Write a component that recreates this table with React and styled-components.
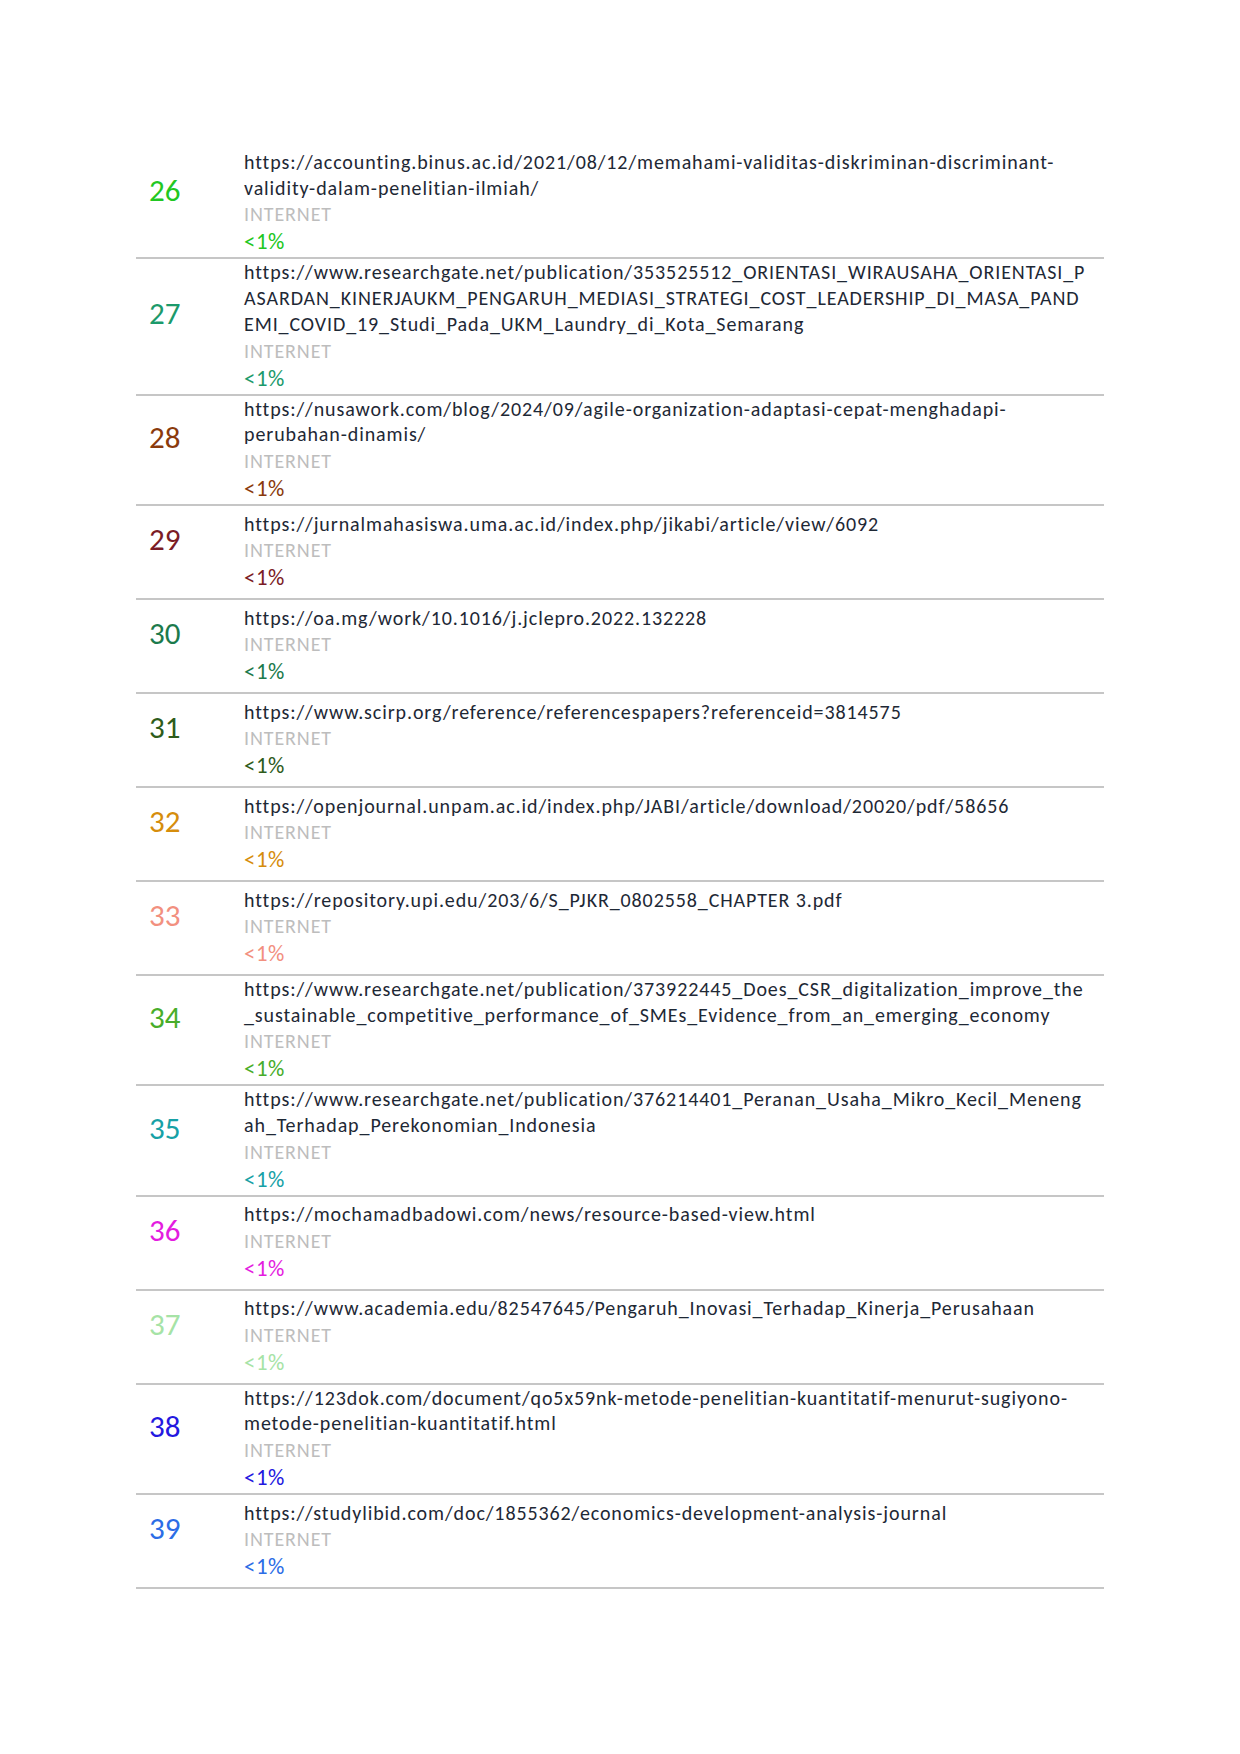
import React from "react";
import styled, { createGlobalStyle } from "styled-components";

const GlobalStyle = createGlobalStyle`
  body {
    margin: 0;
    background: #ffffff;
    font-family: "Carlito", "Open Sans", "Liberation Sans", sans-serif;
  }
`;

const sources = [
  {
    id: 26,
    color: "#22c722",
    lines: [
      "https://accounting.binus.ac.id/2021/08/12/memahami-validitas-diskriminan-discriminant-",
      "validity-dalam-penelitian-ilmiah/",
    ],
  },
  {
    id: 27,
    color: "#1c9a6b",
    lines: [
      "https://www.researchgate.net/publication/353525512_ORIENTASI_WIRAUSAHA_ORIENTASI_P",
      "ASARDAN_KINERJAUKM_PENGARUH_MEDIASI_STRATEGI_COST_LEADERSHIP_DI_MASA_PAND",
      "EMI_COVID_19_Studi_Pada_UKM_Laundry_di_Kota_Semarang",
    ],
  },
  {
    id: 28,
    color: "#8a3a0c",
    lines: [
      "https://nusawork.com/blog/2024/09/agile-organization-adaptasi-cepat-menghadapi-",
      "perubahan-dinamis/",
    ],
  },
  {
    id: 29,
    color: "#7b1c26",
    lines: ["https://jurnalmahasiswa.uma.ac.id/index.php/jikabi/article/view/6092"],
  },
  {
    id: 30,
    color: "#1c7a4c",
    lines: ["https://oa.mg/work/10.1016/j.jclepro.2022.132228"],
  },
  {
    id: 31,
    color: "#2e5c1b",
    lines: ["https://www.scirp.org/reference/referencespapers?referenceid=3814575"],
  },
  {
    id: 32,
    color: "#d68d0c",
    lines: ["https://openjournal.unpam.ac.id/index.php/JABI/article/download/20020/pdf/58656"],
  },
  {
    id: 33,
    color: "#f2907f",
    lines: ["https://repository.upi.edu/203/6/S_PJKR_0802558_CHAPTER 3.pdf"],
  },
  {
    id: 34,
    color: "#48ad2a",
    lines: [
      "https://www.researchgate.net/publication/373922445_Does_CSR_digitalization_improve_the",
      "_sustainable_competitive_performance_of_SMEs_Evidence_from_an_emerging_economy",
    ],
  },
  {
    id: 35,
    color: "#17a1a6",
    lines: [
      "https://www.researchgate.net/publication/376214401_Peranan_Usaha_Mikro_Kecil_Meneng",
      "ah_Terhadap_Perekonomian_Indonesia",
    ],
  },
  {
    id: 36,
    color: "#e41ce0",
    lines: ["https://mochamadbadowi.com/news/resource-based-view.html"],
  },
  {
    id: 37,
    color: "#a6e3a6",
    lines: ["https://www.academia.edu/82547645/Pengaruh_Inovasi_Terhadap_Kinerja_Perusahaan"],
  },
  {
    id: 38,
    color: "#2418e0",
    lines: [
      "https://123dok.com/document/qo5x59nk-metode-penelitian-kuantitatif-menurut-sugiyono-",
      "metode-penelitian-kuantitatif.html",
    ],
  },
  {
    id: 39,
    color: "#2c6de6",
    lines: ["https://studylibid.com/doc/1855362/economics-development-analysis-journal"],
  },
];

function App() {
  return (
    <>
      <GlobalStyle />
      <Page>
        <List>
          {sources.map((s) => (
            <Row key={s.id}>
              <Number color={s.color}>{s.id}</Number>
              <Details>
                {s.lines.map((line, i) => (
                  <Url key={i}>{line}</Url>
                ))}
                <Kind>INTERNET</Kind>
                <Percent color={s.color}>&lt;1%</Percent>
              </Details>
            </Row>
          ))}
        </List>
      </Page>
    </>
  );
}

const Page = styled.div`
  padding: 149px 0 160px 136px;
`;

const List = styled.div`
  width: 968px;
  display: flex;
  flex-direction: column;
`;

const Row = styled.div`
  display: grid;
  grid-template-columns: 108px 1fr;
  align-items: center;
  min-height: 92px;
  border-bottom: 2px solid #c6c6c6;
`;

const Number = styled.div`
  padding-left: 13px;
  margin-bottom: 26px;
  font-size: 31px;
  line-height: 36px;
  color: ${(p) => p.color};
`;

const Details = styled.div`
  display: flex;
  flex-direction: column;
  padding: 1px 0 2px;
  font-size: 20px;
  letter-spacing: 0.9px;
  line-height: 25.7px;
`;

const Url = styled.div`
  white-space: nowrap;
  color: #1e2835;
`;

const Kind = styled.div`
  color: #bdbdbd;
  line-height: 26px;
`;

const Percent = styled.div`
  color: ${(p) => p.color};
  font-size: 22.8px;
  letter-spacing: 0.6px;
  line-height: 28px;
`;

export default App;
